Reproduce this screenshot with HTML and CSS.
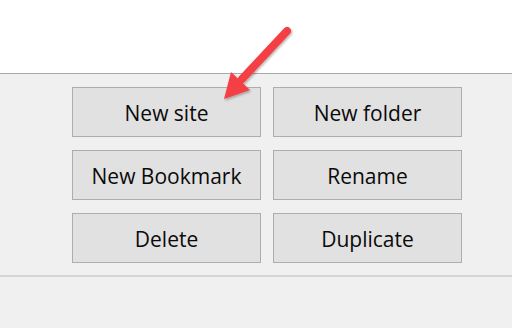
FILE: index.html
```html
<!DOCTYPE html>
<html lang="en">
<head>
  <meta charset="UTF-8" />
  <title>Site actions</title>
  <link rel="stylesheet" href="styles.css">
</head>
<body>
  <!-- Blank area above the panel -->
  <div class="top-area"></div>

  <!-- Button panel -->
  <div class="panel">
    <div class="button-grid">
      <button class="panel-button">New site</button>
      <button class="panel-button">New folder</button>
      <button class="panel-button">New Bookmark</button>
      <button class="panel-button">Rename</button>
      <button class="panel-button">Delete</button>
      <button class="panel-button">Duplicate</button>
    </div>
  </div>

  <div class="footer"></div>

  <!-- Callout arrow pointing at New site -->
  <svg class="callout-arrow" width="80" height="90" viewBox="0 0 80 90" xmlns="http://www.w3.org/2000/svg">
    <defs>
      <filter id="shadow" x="-20%" y="-20%" width="140%" height="140%">
        <feDropShadow dx="1" dy="1.5" stdDeviation="1.2" flood-color="#000" flood-opacity="0.3"/>
      </filter>
    </defs>
    <g filter="url(#shadow)">
      <line x1="70" y1="12" x2="25" y2="60" stroke="#f44144" stroke-width="8" stroke-linecap="round"/>
      <polygon points="7,80 14,53 33,71" fill="#f44144"/>
    </g>
  </svg>
</body>
</html>
```
FILE: styles.css
```css
* {
  margin: 0;
  padding: 0;
  box-sizing: border-box;
}
body {
  width: 512px;
  height: 328px;
  background-color: #f0f0f0;
  font-family: 'Open Sans', 'Noto Sans', sans-serif;
  position: relative;
  overflow: hidden;
}
.top-area {
  height: 74px;
  background-color: #ffffff;
  border-bottom: 1px solid #a9a9ab;
}
.panel {
  padding: 13px 0 12px 72px;
  border-bottom: 2px solid #d4d4d4;
}
.button-grid {
  display: grid;
  grid-template-columns: 189px 189px;
  grid-auto-rows: 50px;
  column-gap: 12px;
  row-gap: 13px;
}
.panel-button {
  background-color: #e1e1e1;
  border: 1px solid #adadad;
  color: #0a0a0a;
  font-family: inherit;
  font-size: 21px;
  padding-top: 2px;
}
.callout-arrow {
  position: absolute;
  left: 217px;
  top: 19px;
}
```
